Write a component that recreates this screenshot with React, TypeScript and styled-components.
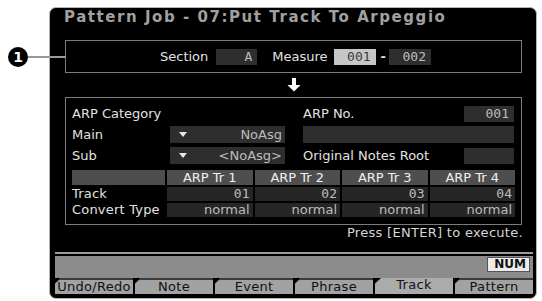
import React from 'react';
import styled, { createGlobalStyle } from 'styled-components';

const GlobalStyle = createGlobalStyle`
  html, body {
    margin: 0;
    padding: 0;
    background: #fff;
  }
  body {
    font-family: 'DejaVu Sans', 'Liberation Sans', sans-serif;
  }
`;

const LCD = `'DejaVu Sans', 'Liberation Sans', sans-serif`;
const LCD_NUM = `'DejaVu Sans Mono', 'Liberation Mono', monospace`;

const Page = styled.div`
  position: relative;
  width: 542px;
  height: 301px;
  padding: 7px 0 0 49px;
  box-sizing: border-box;
`;

// callout "1" sits over the white margin, pointing at the section box
const Callout = styled.div`
  position: absolute;
  left: 8px;
  top: 47px;
  display: flex;
  align-items: center;
`;

const CalloutDot = styled.span`
  width: 20px;
  height: 20px;
  border-radius: 50%;
  background: #000;
  color: #fff;
  font: bold 14px ${LCD};
  display: flex;
  align-items: center;
  justify-content: center;
`;

const CalloutLine = styled.span`
  width: 38px;
  height: 2px;
  background: #9a9a9a;
`;

const Screen = styled.div`
  width: 488px;
  height: 292px;
  box-sizing: border-box;
  border: 1px solid #b4b4b4;
  border-radius: 7px;
  background: #000;
  display: flex;
  flex-direction: column;
  overflow: hidden;
`;

const Title = styled.div`
  height: 32px;
  line-height: 33px;
  padding-left: 14px;
  color: #a0a0a0;
  font: bold 15px ${LCD};
  letter-spacing: 1.55px;
  white-space: nowrap;
`;

const Box = styled.div<{ $h: number }>`
  height: ${(p) => p.$h}px;
  margin: 0 14px 0 15px;
  box-sizing: border-box;
  border: 1px solid #7c7c7c;
`;

const SectionRow = styled(Box)`
  display: flex;
  align-items: center;
  justify-content: center;
  padding-left: 4px;
`;

const Label = styled.span<{ $ml?: number }>`
  color: #e2e2e2;
  font: 13px ${LCD};
  line-height: 16px;
  white-space: nowrap;
  margin-left: ${(p) => p.$ml || 0}px;
`;

const Field = styled.span<{ $w?: number; $active?: boolean; $ml?: number }>`
  width: ${(p) => (p.$w ? `${p.$w}px` : 'auto')};
  height: 16px;
  line-height: 16px;
  margin-left: ${(p) => p.$ml || 0}px;
  box-sizing: border-box;
  padding: 0 5px;
  background: ${(p) => (p.$active ? '#c6c6c6' : '#2e2e2e')};
  color: ${(p) => (p.$active ? '#3a3a3a' : '#bdbdbd')};
  font: 13px ${LCD_NUM};
  text-align: right;
  display: flex;
  align-items: center;
  justify-content: flex-end;
  white-space: nowrap;
`;

const Dash = styled.span`
  color: #e2e2e2;
  font: bold 13px ${LCD};
  margin: 0 3px 0 5px;
`;

const ArrowRow = styled.div`
  height: 24px;
  display: flex;
  align-items: center;
  justify-content: center;
  padding-left: 2px;
`;

const MainBox = styled(Box)`
  padding: 7px 6px 7px 6px;
  display: flex;
  flex-direction: column;
`;

const ParamGrid = styled.div`
  display: grid;
  grid-template-columns: 98px 115px 18px 161px 50px;
  grid-template-rows: repeat(3, 17px);
  row-gap: 4px;
  align-items: center;
`;

const Select = styled.div<{ $col?: string }>`
  grid-column: ${(p) => p.$col || 'auto'};
  height: 17px;
  background: #2e2e2e;
  color: #bdbdbd;
  font: 13px ${LCD};
  display: flex;
  align-items: center;
  padding: 0 3px 0 9px;
  box-sizing: border-box;
`;

const Caret = styled.span`
  width: 0;
  height: 0;
  border-left: 4px solid transparent;
  border-right: 4px solid transparent;
  border-top: 5px solid #e8e8e8;
  margin-right: auto;
`;

const Table = styled.div`
  margin-top: 6px;
  display: grid;
  grid-template-columns: 93px repeat(4, 1fr);
  grid-template-rows: 15px 14px 14px;
  column-gap: 2px;
  row-gap: 2px;
`;

const HeadCell = styled.div`
  background: #4e4e4e;
  color: #f0f0f0;
  font: 13px ${LCD};
  line-height: 15px;
  text-align: center;
  white-space: nowrap;
`;

const RowLabel = styled.div`
  color: #e2e2e2;
  font: 13px ${LCD};
  line-height: 14px;
  white-space: nowrap;
  letter-spacing: 0.2px;
`;

const Cell = styled.div<{ $num?: boolean }>`
  background: #262626;
  color: #bdbdbd;
  font: 13px ${(p) => (p.$num ? LCD_NUM : LCD)};
  line-height: 14px;
  text-align: right;
  padding-right: 3px;
  white-space: nowrap;
`;

const Prompt = styled.div`
  height: 25px;
  line-height: 26px;
  text-align: right;
  padding-right: 13px;
  color: #d6d6d6;
  font: 13px ${LCD};
  letter-spacing: 0.3px;
`;

const Bottom = styled.div`
  margin: 2px 3px 0 5px;
  display: flex;
  flex-direction: column;
`;

const Rule = styled.div`
  height: 2px;
  background: #9c9c9c;
  margin-bottom: 2px;
`;

const InfoBar = styled.div`
  height: 22px;
  background: #8c8c8c;
  display: flex;
  justify-content: flex-end;
  align-items: flex-start;
  padding: 1px 3px 0 0;
  box-sizing: border-box;
`;

const NumBadge = styled.span`
  width: 43px;
  height: 15px;
  box-sizing: border-box;
  border: 1px solid #555;
  background: #ececec;
  color: #111;
  font: bold 12px ${LCD};
  line-height: 13px;
  text-align: right;
  padding-right: 3px;
`;

const Tabs = styled.div`
  display: flex;
  height: 16px;
  gap: 2px;
`;

const Tab = styled.div<{ $active?: boolean }>`
  flex: 1;
  background: ${(p) => (p.$active ? '#ababab' : '#a2a2a2')};
  border-top: ${(p) => (p.$active ? 'none' : '2px solid #3c3c3c')};
  box-sizing: border-box;
  clip-path: polygon(6px 0, 100% 0, 100% 100%, 0 100%, 0 35%);
  color: #111;
  font: 13px ${LCD};
  line-height: ${(p) => (p.$active ? '13px' : '14px')};
  text-align: center;
  white-space: nowrap;
  letter-spacing: 0.3px;
`;

const DownArrow = () => (
  <svg width="14" height="14" viewBox="0 0 14 14">
    <path d="M5 0h4v7h4.5L7 13.5 0.5 7H5z" fill="#fff" />
  </svg>
);

const tracks = [
  { name: 'ARP Tr 1', track: '01' },
  { name: 'ARP Tr 2', track: '02' },
  { name: 'ARP Tr 3', track: '03' },
  { name: 'ARP Tr 4', track: '04' },
];

const tabs = ['Undo/Redo', 'Note', 'Event', 'Phrase', 'Track', 'Pattern'];

const App: React.FC = () => {
  return (
    <Page>
      <GlobalStyle />
      <Callout>
        <CalloutDot>1</CalloutDot>
        <CalloutLine />
      </Callout>
      <Screen>
        <Title>Pattern Job - 07:Put Track To Arpeggio</Title>

        <SectionRow $h={33}>
          <Label>Section</Label>
          <Field $w={41} $ml={8}>A</Field>
          <Label $ml={15}>Measure</Label>
          <Field $w={42} $ml={6} $active>
            001
          </Field>
          <Dash>-</Dash>
          <Field $w={42}>002</Field>
        </SectionRow>

        <ArrowRow>
          <DownArrow />
        </ArrowRow>

        <MainBox $h={128}>
          <ParamGrid>
            <Label style={{ gridColumn: '1 / 3' }}>ARP Category</Label>
            <Label style={{ gridColumn: '4' }}>ARP No.</Label>
            <Field>001</Field>

            <Label>Main</Label>
            <Select>
              <Caret />
              NoAsg
            </Select>
            <span />
            <Select $col="4 / 6" />

            <Label>Sub</Label>
            <Select>
              <Caret />
              &lt;NoAsg&gt;
            </Select>
            <span />
            <Label>Original Notes Root</Label>
            <Field />
          </ParamGrid>

          <Table>
            <HeadCell />
            {tracks.map((t) => (
              <HeadCell key={t.name}>{t.name}</HeadCell>
            ))}
            <RowLabel>Track</RowLabel>
            {tracks.map((t) => (
              <Cell key={t.name} $num>
                {t.track}
              </Cell>
            ))}
            <RowLabel>Convert Type</RowLabel>
            {tracks.map((t) => (
              <Cell key={t.name}>normal</Cell>
            ))}
          </Table>
        </MainBox>

        <Prompt>Press [ENTER] to execute.</Prompt>

        <Bottom>
          <Rule />
          <InfoBar>
            <NumBadge>NUM</NumBadge>
          </InfoBar>
          <Tabs>
            {tabs.map((t) => (
              <Tab key={t} $active={t === 'Track'}>
                {t}
              </Tab>
            ))}
          </Tabs>
        </Bottom>
      </Screen>
    </Page>
  );
};

export default App;
